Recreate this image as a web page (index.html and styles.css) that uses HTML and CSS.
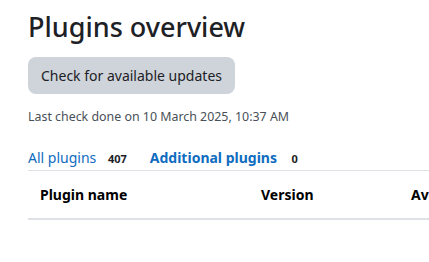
FILE: index.html
```html
<!DOCTYPE html>
<html lang="en">
<head>
<meta charset="utf-8">
<title>Plugins overview</title>
<link rel="stylesheet" href="styles.css">
</head>
<body>
<main class="page">
  <h2 class="title">Plugins overview</h2>
  <button class="btn-check" type="button">Check for available updates</button>
  <p class="last-check">Last check done on 10 March 2025, 10:37 AM</p>
  <nav class="tabs">
    <a class="tab" href="#">All plugins <span class="count">407</span></a>
    <a class="tab active" href="#">Additional plugins <span class="count">0</span></a>
  </nav>
  <div class="table-wrap">
    <table class="plugins">
      <thead>
        <tr>
          <th class="col-name">Plugin name</th>
          <th class="col-version">Version</th>
          <th class="col-avail">Availability</th>
        </tr>
      </thead>
    </table>
  </div>
</main>
</body>
</html>
```
FILE: styles.css
```css
html, body {
  margin: 0;
  padding: 0;
  background: #ffffff;
  overflow: hidden;
}
body {
  font-family: "Noto Sans", "Open Sans", sans-serif;
  color: #1d2125;
}
.page {
  padding: 0 0 0 28px;
}
.title {
  margin: 0;
  padding-top: 10px;
  font-size: 27px;
  font-weight: 500;
  line-height: 34px;
  color: #1d2125;
}
.btn-check {
  margin-top: 13px;
  display: block;
  height: 37px;
  padding: 0 13px;
  border: none;
  border-radius: 8px;
  background: #ced4da;
  color: #1d2125;
  font-family: inherit;
  font-size: 14px;
}
.last-check {
  margin: 15px 0 0;
  font-size: 12.4px;
  line-height: 16px;
  color: #495057;
}
.tabs {
  display: flex;
  align-items: baseline;
  gap: 23px;
  margin-top: 23px;
  padding-bottom: 1px;
  border-bottom: 1px solid #dee2e6;
}
.tab {
  font-size: 14px;
  line-height: 20px;
  color: #0f6cbf;
  text-decoration: none;
}
.tab.active {
  font-weight: 700;
}
.count {
  margin-left: 8px;
  font-size: 11px;
  font-weight: 700;
  color: #1d2125;
}
.tab.active .count {
  margin-left: 11px;
}
.table-wrap {
  overflow: hidden;
}
.plugins {
  border-collapse: collapse;
  width: 520px;
  table-layout: fixed;
}
.plugins th {
  text-align: left;
  font-size: 14px;
  font-weight: 700;
  color: #000;
  padding: 14px 12px 14px;
  border-bottom: 2px solid #dee2e6;
  white-space: nowrap;
  overflow: hidden;
}
.col-name { width: 197px; }
.col-version { width: 126px; }
.col-avail { width: 125px; }
```
